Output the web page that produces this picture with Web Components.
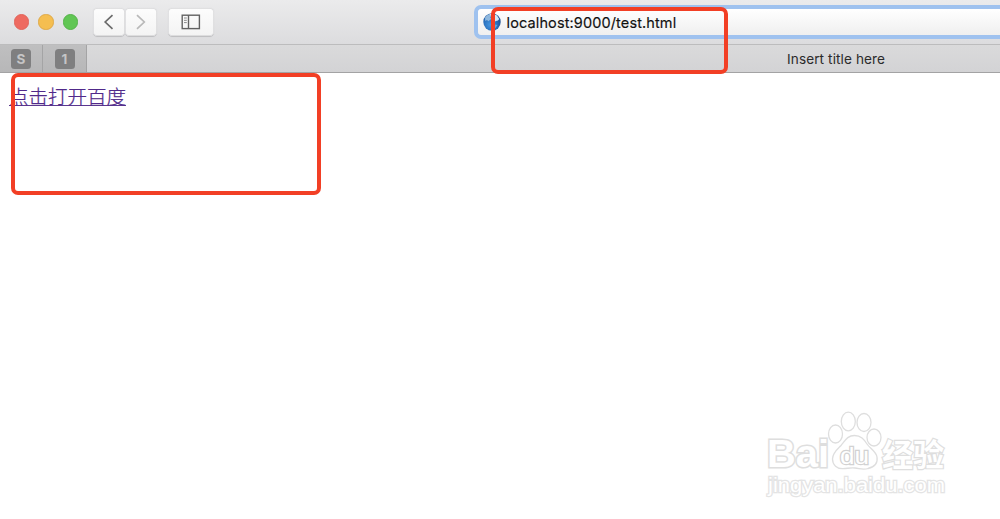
<!DOCTYPE html>
<html lang="zh">
<head>
<meta charset="UTF-8">
<title>Insert title here</title>
<style>
	html, body {
		margin: 0;
		height: 100%;
		overflow: hidden;
		background: #fff;
	}
</style>
</head>
<body>
<browser-window>
	<tool-bar slot="toolbar">
		<address-field>localhost:9000/test.html</address-field>
	</tool-bar>
	<tab-bar slot="tabs">
		<pinned-tab slot="pinned">S</pinned-tab>
		<pinned-tab slot="pinned" style="--width: 44px">1</pinned-tab>
		Insert title here
	</tab-bar>
	<page-link>点击打开百度</page-link>
</browser-window>
<mark-box style="left: 491px; top: 7px; width: 237px; height: 67px"></mark-box>
<mark-box style="left: 11px; top: 73px; width: 310px; height: 122px"></mark-box>
<baidu-watermark></baidu-watermark>

<script>
class BaseElement extends HTMLElement {
	constructor() {
		super();
		this.attachShadow({ mode: 'open' }).innerHTML = `${this.html()}<style>${this.css()}</style>`;
	}
}

class BrowserWindow extends BaseElement {
	html() {
		return `
			<header><slot name="toolbar"></slot><slot name="tabs"></slot></header>
			<main><slot></slot></main>
		`;
	}

	css() {
		return `
			:host {
				display: flex;
				flex-direction: column;
				height: 100%;
				font-family: Inter, "Liberation Sans", sans-serif;
			}
			header { flex: none; }
			main { flex: 1; padding: 16px 9px; }
		`;
	}
}

class ToolBar extends BaseElement {
	html() {
		return `
			<div class="lights"><i class="close"></i><i class="min"></i><i class="max"></i></div>
			<div class="nav">
				<nav-button><svg width="32" height="28"><path d="M19.5 7.2L12.2 14L19.5 20.8" fill="none" stroke="#6b6b6b" stroke-width="1.7"/></svg></nav-button>
				<nav-button><svg width="32" height="28"><path d="M12 7.2L19.3 14L12 20.8" fill="none" stroke="#b9b9b9" stroke-width="1.7"/></svg></nav-button>
			</div>
			<nav-button style="--width: 46px">
				<svg width="46" height="28" fill="none" stroke="#626262">
					<rect x="14.2" y="7.2" width="17.2" height="13.4" stroke-width="1.4"/>
					<path d="M20.5 7V20.5" stroke-width="1.4"/>
					<path d="M16 10H18.8M16 12.3H18.8M16 14.6H18.8" stroke-width="1" stroke="#8a8a8a"/>
				</svg>
			</nav-button>
			<slot></slot>
		`;
	}

	css() {
		return `
			:host {
				display: flex;
				box-sizing: border-box;
				height: 44px;
				padding-left: 14px;
				align-items: center;
				background: linear-gradient(#ebebec, #dcdcde);
			}
			.lights { display: flex; gap: 9px; width: 79px; }
			i {
				box-sizing: border-box;
				width: 15.3px;
				height: 15.3px;
				border-radius: 50%;
				border: 1px solid #e1645a;
				background: #ee6a60;
			}
			.min { border-color: #dfa948; background: #f5be50; }
			.max { border-color: #54b348; background: #61c654; }
			.nav { display: flex; width: 75px; }
			slot { display: block; flex: 1; margin-left: 260px; }
		`;
	}
}

class NavButton extends BaseElement {
	html() {
		return `<slot></slot>`;
	}

	css() {
		return `
			:host {
				display: block;
				box-sizing: border-box;
				flex: none;
				width: var(--width, 32px);
				height: 28px;
				border-radius: 4.5px;
				background: linear-gradient(#fdfdfd, #f3f3f3);
				box-shadow: inset 0 0 0 .7px #d6d6d8, 0 .7px .7px #bebec0;
			}
			::slotted(svg) { display: block; }
		`;
	}
}

class AddressField extends BaseElement {
	html() {
		return `
			<svg width="18" height="18" viewBox="0 0 18 18">
				<defs><radialGradient id="sea" cx=".4" cy=".65" r=".65"><stop offset="0" stop-color="#4797e0"/><stop offset=".6" stop-color="#2a70bd"/><stop offset="1" stop-color="#1b4d8f"/></radialGradient></defs>
				<circle cx="9" cy="9" r="8.7" fill="url(#sea)"/>
				<path d="M2 4.7C4 1.8 6 .9 8 .8L9 3L7.3 4L8.2 6L5.4 8.3L4 7L2.3 8Z" fill="#8fb8de"/>
				<path d="M7 1L11 1L14 2.5L16.2 6L15 7.5L13 8L11 9L8.2 6.5L9.5 5L8 3Z" fill="#d4e7f6"/>
				<path d="M12 11.5L14.5 12L12.5 15L11 14Z" fill="#5aa5e2"/>
			</svg>
			<span><slot></slot></span>
		`;
	}

	css() {
		return `
			:host {
				display: flex;
				box-sizing: border-box;
				height: 34px;
				align-items: center;
				gap: 5.5px;
				padding-left: 5px;
				border: 4px solid #9fc2ef;
				border-right: 0;
				border-radius: 7px 0 0 7px;
				background: linear-gradient(#fff, #efefef);
			}
			svg { flex: none; }
			span {
				padding-top: 2px;
				font-size: 14.5px;
				line-height: 20px;
				letter-spacing: .12px;
				color: #111;
				white-space: nowrap;
				-webkit-text-stroke: .15px #111;
			}
		`;
	}
}

class TabBar extends BaseElement {
	html() {
		return `<slot name="pinned"></slot><div><slot></slot></div>`;
	}

	css() {
		return `
			:host {
				display: flex;
				box-sizing: border-box;
				height: 29px;
				border-top: 1px solid #bcbcbd;
				border-bottom: 1px solid #a3a3a4;
				background: linear-gradient(#dadadb, #d3d3d5);
			}
			div {
				flex: 1;
				padding-left: 700px;
				font-size: 13.6px;
				line-height: 28px;
				letter-spacing: .1px;
				color: #2b2b2b;
				white-space: nowrap;
			}
		`;
	}
}

class PinnedTab extends BaseElement {
	html() {
		return `<b><slot></slot></b>`;
	}

	css() {
		return `
			:host {
				display: flex;
				box-sizing: border-box;
				width: var(--width, 43px);
				align-items: center;
				justify-content: center;
				border-right: 1px solid #a4a4a5;
				background: linear-gradient(#bfbfc0, #b7b7b8);
			}
			b {
				width: 20px;
				height: 20px;
				border-radius: 3.5px;
				background: #7f7f80;
				color: #c5c5c6;
				font-size: 13.5px;
				line-height: 20px;
				text-align: center;
			}
		`;
	}
}

class PageLink extends BaseElement {
	html() {
		return `<a href="#"><slot></slot></a>`;
	}

	css() {
		return `
			:host { display: block; }
			a {
				display: block;
				width: 117px;
				height: 16px;
				border-bottom: 1px solid #5b378f;
				font-family: "Liberation Serif", "Noto Sans CJK SC", serif;
				font-size: 19.5px;
				font-weight: 300;
				line-height: 18px;
				color: #50298a;
				text-decoration: none;
				white-space: nowrap;
				-webkit-text-stroke: .25px #50298a;
			}
		`;
	}
}

// red rounded frame laid over the window
class MarkBox extends BaseElement {
	html() {
		return ``;
	}

	css() {
		return `
			:host {
				position: absolute;
				box-sizing: border-box;
				border: 4px solid #f23f25;
				border-radius: 7px;
			}
		`;
	}
}

class BaiduWatermark extends BaseElement {
	html() {
		return `
			<svg width="200" height="100" viewBox="760 405 200 100">
				<g fill="#fff" stroke="#dedede" stroke-width="1.3">
					<text x="767" y="467" font-size="39" font-weight="700" stroke-width="3" paint-order="stroke" textLength="62" lengthAdjust="spacingAndGlyphs">Bai</text>
					<ellipse cx="835.5" cy="434" rx="7" ry="9"/>
					<ellipse cx="848.3" cy="421.5" rx="7" ry="9.3"/>
					<ellipse cx="864" cy="422.5" rx="7" ry="9"/>
					<ellipse cx="874" cy="437.5" rx="7" ry="8.5"/>
					<path d="M854.5 435.5C847 435.5 845 441 841 445.5C837 449.5 832.5 453 832.5 459C832.5 465 837 469 843 468.7C848 468.5 850 467.5 855 468C860 468.5 863 470 868 468.5C874 467 878 463 877 457C876 451 870 448.5 867 444C864 439.5 861 435.5 854.5 435.5Z"/>
					<text x="840" y="464" font-size="24" textLength="29" stroke="#d2d2d2" stroke-width="2.4" paint-order="stroke" lengthAdjust="spacingAndGlyphs">du</text>
					<text class="cjk" x="882" y="465.5" font-size="31" font-weight="700" stroke-width="2.4" paint-order="stroke" textLength="62" lengthAdjust="spacingAndGlyphs">经验</text>
					<text x="768" y="491.5" font-size="20" stroke="#e4e4e4" stroke-width="2.4" paint-order="stroke" textLength="177" lengthAdjust="spacingAndGlyphs">jingyan.baidu.com</text>
				</g>
			</svg>
		`;
	}

	css() {
		return `
			:host { position: absolute; left: 760px; top: 405px; width: 200px; height: 100px; }
			svg { display: block; }
			text { font-family: "Liberation Sans", sans-serif; }
			.cjk { font-family: "Noto Sans CJK SC", sans-serif; }
		`;
	}
}

customElements.define('nav-button', NavButton);
customElements.define('address-field', AddressField);
customElements.define('tool-bar', ToolBar);
customElements.define('pinned-tab', PinnedTab);
customElements.define('tab-bar', TabBar);
customElements.define('page-link', PageLink);
customElements.define('browser-window', BrowserWindow);
customElements.define('mark-box', MarkBox);
customElements.define('baidu-watermark', BaiduWatermark);
</script>
</body>
</html>
